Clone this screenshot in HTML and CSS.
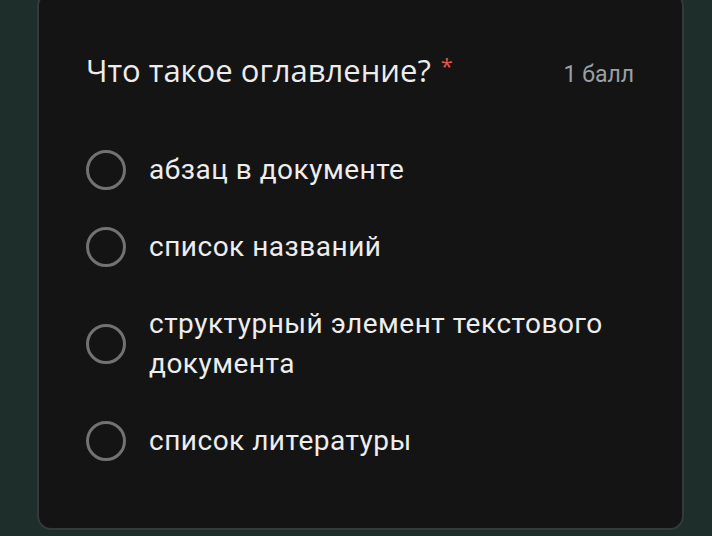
FILE: index.html
```html
<!DOCTYPE html>
<html lang="ru">
<head>
<meta charset="UTF-8">
<meta name="viewport" content="width=device-width, initial-scale=1.0">
<title>Вопрос</title>
<link rel="stylesheet" href="styles.css">
</head>
<body>
  <div class="card">
    <div class="question">
      <h2 class="title">Что такое оглавление? <span class="required">*</span></h2>
      <span class="points">1 балл</span>
    </div>
    <div class="options">
      <label class="option">
        <span class="radio"></span>
        <span class="option-text">абзац в документе</span>
      </label>
      <label class="option">
        <span class="radio"></span>
        <span class="option-text">список названий</span>
      </label>
      <label class="option">
        <span class="radio"></span>
        <span class="option-text">структурный элемент текстового документа</span>
      </label>
      <label class="option">
        <span class="radio"></span>
        <span class="option-text">список литературы</span>
      </label>
    </div>
  </div>
</body>
</html>
```

FILE: styles.css
```css
body {
  margin: 0;
  background-color: #1d2e2b;
  font-family: Roboto, "Noto Sans", sans-serif;
  height: 536px;
  overflow: hidden;
}
.card {
  box-sizing: border-box;
  width: 647px;
  height: 538px;
  margin: -8px 0 0 37px;
  background-color: #141414;
  border: 2px solid #333a39;
  border-radius: 14px;
  padding: 51px 48px 0 47px;
}
.question {
  display: flex;
  justify-content: space-between;
  align-items: baseline;
}
.title {
  margin: 0;
  font-family: "Open Sans", Roboto, sans-serif;
  font-weight: 400;
  font-size: 31px;
  line-height: 40px;
  color: #ececec;
}
.required {
  color: #e3584b;
  font-size: 22px;
  margin-left: 2px;
  vertical-align: 8px;
}
.points {
  font-size: 23px;
  color: #9aa0a6;
}
.options {
  display: flex;
  flex-direction: column;
  gap: 37px;
  margin-top: 60px;
}
.option {
  display: flex;
  align-items: center;
  gap: 23px;
}
.radio {
  flex: none;
  box-sizing: border-box;
  width: 40px;
  height: 40px;
  border: 3px solid #727272;
  border-radius: 50%;
}
.option-text {
  font-size: 28px;
  line-height: 40px;
  letter-spacing: 0.5px;
  color: #ededed;
  max-width: 470px;
}
```
